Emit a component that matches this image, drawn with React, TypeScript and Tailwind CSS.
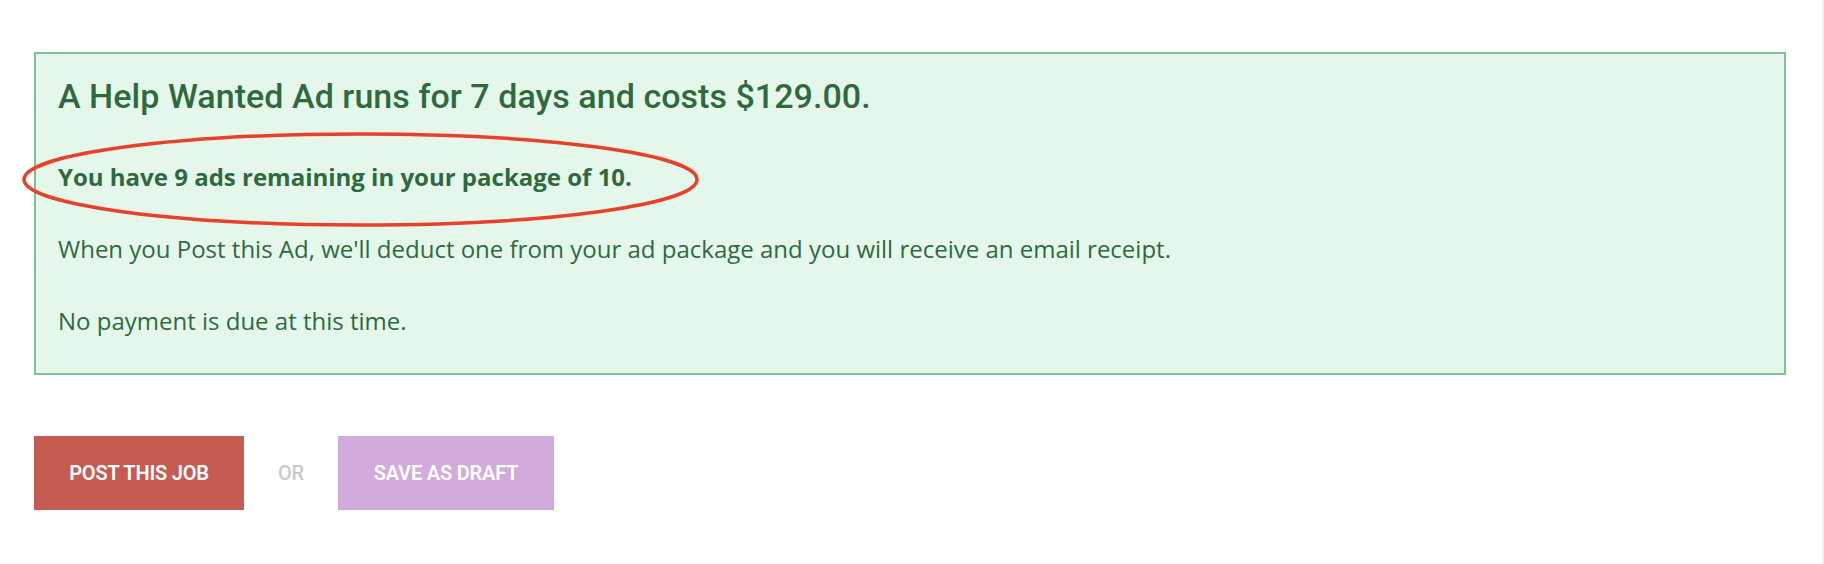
export default function App() {
  return (
    <div className="flex min-h-[564px] w-full bg-white">
      <div className="relative flex-1 pl-[34px] pt-[52px]">
        <div className="w-[1752px] border-2 border-[#7bc494] bg-[#e5f7ea] px-[22px] pt-[22px] pb-[36px] text-[#2f6a3f]">
          <h2 className="font-['Roboto',sans-serif] text-[34px] leading-[40px] font-medium tracking-[0.05px]">
            A Help Wanted Ad runs for 7 days and costs $129.00.
          </h2>
          <p className="mt-[45px] font-['Open_Sans',sans-serif] text-[24px] leading-[32px] font-bold">
            You have 9 ads remaining in your package of 10.
          </p>
          <p className="mt-[40px] font-['Open_Sans',sans-serif] text-[24px] leading-[32px]">
            When you Post this Ad, we'll deduct one from your ad package and you will receive an email receipt.
          </p>
          <p className="mt-[40px] font-['Open_Sans',sans-serif] text-[24px] leading-[32px]">
            No payment is due at this time.
          </p>
        </div>

        <div className="mt-[61px] flex items-center font-['Roboto',sans-serif] text-[20px] font-semibold tracking-[-0.2px]">
          <button className="flex h-[74px] w-[210px] items-center justify-center bg-[#c65b51] uppercase text-white">
            Post this job
          </button>
          <span className="w-[94px] text-center font-medium uppercase text-[#c9c9c9]">or</span>
          <button className="flex h-[74px] w-[216px] items-center justify-center bg-[#d0abdb] uppercase text-white">
            Save as draft
          </button>
        </div>

        {/* red annotation ring around the package count */}
        <svg
          className="pointer-events-none absolute left-[20px] top-[130px]"
          width="682"
          height="100"
          viewBox="0 0 682 100"
        >
          <ellipse cx="340.5" cy="49.5" rx="336.5" ry="45.5" fill="none" stroke="#e8412a" strokeWidth="3.5" />
        </svg>
      </div>
      <div className="w-[2px] bg-[#f0f0f0]" />
    </div>
  )
}
